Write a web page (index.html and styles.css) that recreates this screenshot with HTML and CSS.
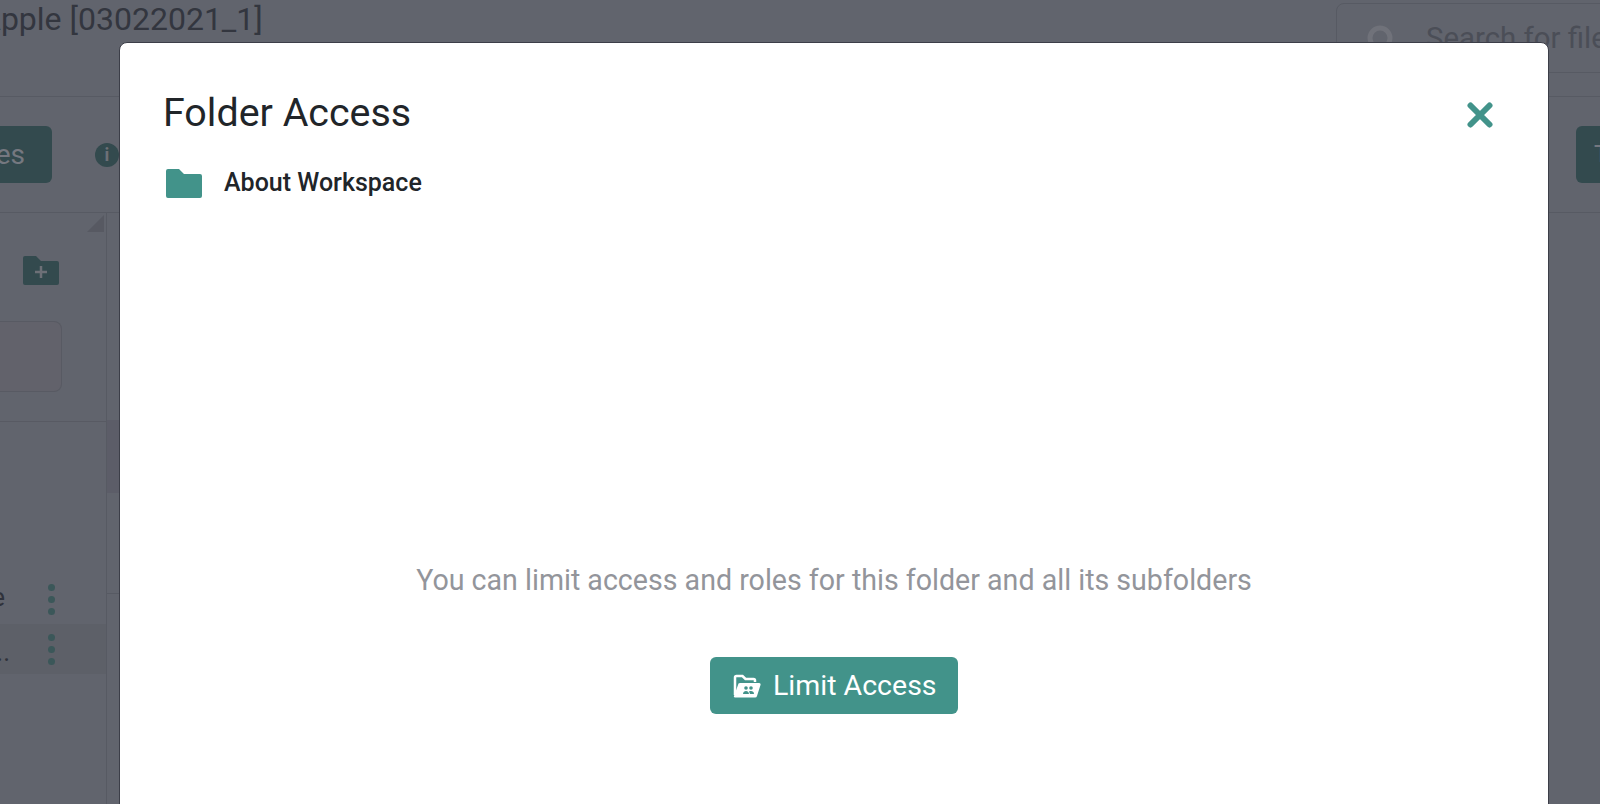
FILE: index.html
```html
<!DOCTYPE html>
<html lang="en">
<head>
  <meta charset="UTF-8">
  <title>Folder Access</title>
  <link rel="stylesheet" href="styles.css">
</head>
<body>
  <!-- page behind the dialog -->
  <div class="pagina">
    <header class="topo">
      <h2 class="titulo">Apple [03022021_1]</h2>
      <div class="busca">
        <svg class="lupa" width="26" height="26" viewBox="0 0 26 26"><circle cx="13" cy="13" r="10" fill="none" stroke="#70727a" stroke-width="5"/></svg>
        <span>Search for files</span>
      </div>
    </header>
    <div class="barra">
      <div class="botao-fundo"><span>Files</span></div>
      <span class="info">i</span>
      <div class="botao-direita">T</div>
    </div>
    <div class="corpo">
      <aside class="lateral">
        <div class="canto"></div>
        <svg class="nova-pasta" width="36" height="29" viewBox="0 0 36 29">
          <path d="M2 0h11l5 5h16a2 2 0 0 1 2 2v20a2 2 0 0 1-2 2H2a2 2 0 0 1-2-2V2a2 2 0 0 1 2-2z" fill="#334a4e"/>
          <path d="M18 10v12M12 16h12" stroke="#6d7077" stroke-width="2.5"/>
        </svg>
        <div class="caixa"></div>
        <div class="lista">
          <div class="linha linha-um"><span>Workspace</span><i class="pontos"><b></b><b></b><b></b></i></div>
          <div class="linha linha-dois"><span>Folder name...</span><i class="pontos"><b></b><b></b><b></b></i></div>
        </div>
      </aside>
      <div class="rolagem">
        <div class="trilho"></div>
        <div class="divisor"></div>
      </div>
    </div>
  </div>

  <!-- dialog -->
  <div class="modal">
    <div class="modal-topo">
      <h1>Folder Access</h1>
      <button class="fechar" aria-label="Close">
        <svg width="26" height="26" viewBox="0 0 26 26"><path d="M3.500 3.500l19 19M22.500 3.500l-19 19" stroke="#42938a" stroke-width="6" stroke-linecap="round"/></svg>
      </button>
    </div>
    <div class="pasta">
      <svg width="36" height="29" viewBox="0 0 36 29"><path d="M2 0h11l5 5h16a2 2 0 0 1 2 2v20a2 2 0 0 1-2 2H2a2 2 0 0 1-2-2V2a2 2 0 0 1 2-2z" fill="#42938a"/></svg>
      <span>About Workspace</span>
    </div>
    <div class="conteudo">
      <p class="aviso">You can limit access and roles for this folder and all its subfolders</p>
      <button class="limitar">
        <svg width="28" height="24" viewBox="0 0 28 24">
          <path d="M2 21V3.500A1.500 1.500 0 0 1 3.500 2h6l3 3h8A1.500 1.500 0 0 1 22 6.500V8" fill="none" stroke="#fff" stroke-width="2.500"/>
          <path d="M7 9h19a1.500 1.500 0 0 1 1.500 2L24 22a2 2 0 0 1-2 1.500H2a1 1 0 0 1-1-1.500l4-11a2 2 0 0 1 2-2z" fill="#fff"/>
          <circle cx="13" cy="14" r="1.800" fill="#42938a"/>
          <circle cx="18" cy="14" r="1.800" fill="#42938a"/>
          <path d="M10 20c0-4 6-4 6 0zM17 20h4c0-3-3-3.500-5-2.500z" fill="#42938a"/>
        </svg>
        <span>Limit Access</span>
      </button>
    </div>
  </div>
</body>
</html>
```

FILE: styles.css
```css
* {
  box-sizing: border-box;
  margin: 0;
  padding: 0;
}

html, body {
  height: 100%;
  overflow: hidden;
}

body {
  background: #61646d;
  font-family: Roboto, "Liberation Sans", sans-serif;
}

/* page behind the dialog */
.pagina {
  height: 804px;
  display: flex;
  flex-direction: column;
  overflow: hidden;
}

.topo {
  height: 97px;
  flex: none;
  display: flex;
  justify-content: space-between;
  border-bottom: 1px solid #575a63;
  position: relative;
}

.titulo {
  font-size: 32px;
  font-weight: 400;
  color: #33363f;
  margin-left: -20px;
  margin-top: -1px;
  line-height: 40px;
  white-space: nowrap;
}

.busca {
  width: 320px;
  height: 70px;
  margin-top: 3px;
  margin-right: -56px;
  border: 1px solid #575a63;
  border-radius: 8px;
  display: flex;
  align-items: center;
  gap: 33px;
  padding-left: 30px;
  font-size: 29.4px;
  color: #4b4e57;
  white-space: nowrap;
  overflow: hidden;
}

.lupa {
  flex: none;
}

.barra {
  height: 116px;
  flex: none;
  display: flex;
  align-items: center;
  border-bottom: 1px solid #575a63;
  position: relative;
}

.botao-fundo {
  width: 52px;
  height: 57px;
  background: #334a4e;
  border-radius: 0 6px 6px 0;
  display: flex;
  align-items: center;
  justify-content: flex-end;
  padding-right: 27px;
  color: #757880;
  font-size: 28px;
  white-space: nowrap;
}

.info {
  width: 24px;
  height: 24px;
  margin-left: 43px;
  background: #334a4e;
  border-radius: 50%;
  color: #6d7077;
  font-size: 18px;
  font-weight: 700;
  line-height: 24px;
  text-align: center;
}

.botao-direita {
  margin-left: auto;
  width: 24px;
  height: 57px;
  background: #334a4e;
  border-radius: 6px 0 0 6px;
  color: #757880;
  font-size: 24px;
  line-height: 57px;
  padding-left: 18px;
  overflow: hidden;
}

.corpo {
  flex: 1;
  display: flex;
  min-height: 0;
}

.lateral {
  width: 107px;
  flex: none;
  border-right: 1px solid #575a63;
  position: relative;
  display: flex;
  flex-direction: column;
}

.canto {
  position: absolute;
  top: 2px;
  right: 2px;
  width: 0;
  height: 0;
  border-left: 17px solid transparent;
  border-bottom: 17px solid #575962;
}

.nova-pasta {
  margin: 43px 0 0 23px;
  flex: none;
}

.caixa {
  width: 62px;
  height: 71px;
  margin-top: 36px;
  flex: none;
  background: #62626b;
  border: 1px solid #585a63;
  border-left: 0;
  border-radius: 0 8px 8px 0;
}

.lista {
  margin-top: 29px;
  border-top: 1px solid #585a63;
  padding-top: 152px;
}

.linha {
  height: 50px;
  position: relative;
  font-size: 26px;
  color: #2f323b;
  white-space: nowrap;
}

.linha span {
  position: absolute;
}

.linha-um span {
  top: 8px;
  right: 101px;
}

.linha-dois {
  background: #5d6068;
}

.linha-dois span {
  top: 13px;
  right: 96px;
}

.pontos {
  position: absolute;
  left: 48px;
  top: 10px;
  display: flex;
  flex-direction: column;
  gap: 5px;
}

.pontos b {
  width: 7px;
  height: 7px;
  border-radius: 50%;
  background: #3b5759;
}

.rolagem {
  flex: 1;
}

.trilho {
  width: 13px;
  height: 73px;
  margin-top: 207px;
  background: #5c5d68;
}

.divisor {
  width: 13px;
  height: 1px;
  margin-top: 100px;
  background: #575a63;
}

/* dialog */
.modal {
  position: absolute;
  left: 119px;
  top: 42px;
  width: 1430px;
  height: 800px;
  background: #fff;
  border: 1px solid #3c3e48;
  border-radius: 8px;
  padding: 0 42px;
  color: #212529;
}

.modal-topo {
  display: flex;
  justify-content: space-between;
  align-items: center;
  padding-top: 48px;
}

.modal-topo h1 {
  font-size: 39.4px;
  font-weight: 400;
  line-height: 44px;
  margin-left: 1px;
}

.fechar {
  background: none;
  border: none;
  margin-right: 13px;
  margin-top: 3px;
  display: flex;
  cursor: pointer;
}

.pasta {
  display: flex;
  align-items: center;
  gap: 22px;
  margin: 33px 0 0 4px;
  font-size: 25px;
  font-weight: 500;
}

.pasta span {
  margin-bottom: 2px;
}

.conteudo {
  margin-top: 363px;
  display: flex;
  flex-direction: column;
  align-items: center;
}

.aviso {
  font-size: 28.6px;
  line-height: 36px;
  color: #93959b;
}

.limitar {
  margin-top: 59px;
  width: 248px;
  height: 57px;
  padding: 0 0 0 23px;
  display: flex;
  align-items: center;
  gap: 12px;
  background: #42938a;
  color: #fff;
  border: none;
  border-radius: 6px;
  font-family: inherit;
  font-size: 28.5px;
}
```
